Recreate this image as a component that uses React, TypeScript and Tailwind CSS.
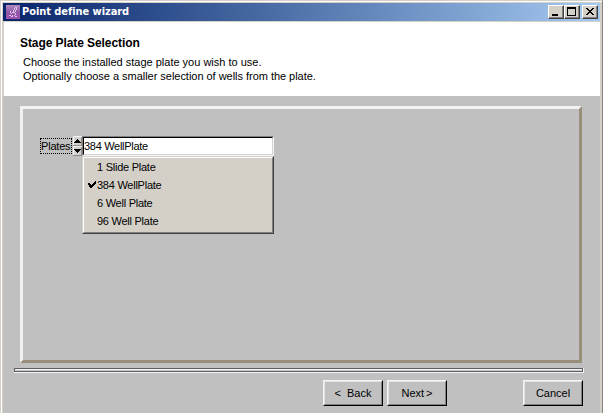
import React from "react";

const PLATES = ["1 Slide Plate", "384 WellPlate", "6 Well Plate", "96 Well Plate"];
const SELECTED = "384 WellPlate";

function CaptionButton({ children }: { children: React.ReactNode }) {
  return (
    <div className="h-[14px] w-4 border border-t-white border-l-white border-r-[#404040] border-b-[#404040] bg-[#d4d0c8]">
      <div className="h-full w-full border-r border-b border-[#808080]">
        <svg width="14" height="12" viewBox="0 0 14 12" shapeRendering="crispEdges" className="block overflow-visible">
          {children}
        </svg>
      </div>
    </div>
  );
}

function PushButton({ children }: { children: React.ReactNode }) {
  return (
    <button className="h-[26px] w-[60px] border border-t-[#f4f4f4] border-l-[#f4f4f4] border-r-black border-b-black bg-[#c0c0c0] text-[11px]">
      <span className="flex h-full w-full items-center justify-center border border-t-[#e4e4e4] border-l-[#e4e4e4] border-r-[#808080] border-b-[#808080] whitespace-pre">
        {children}
      </span>
    </button>
  );
}

function TitleBar() {
  return (
    <div className="flex h-[18px] items-center bg-linear-to-r from-[#0a246a] to-[#a6caf0] pr-[2px] pl-[3px]">
      <svg width="14" height="14" viewBox="0 0 14 14" shapeRendering="crispEdges">
        <defs>
          <linearGradient id="app" x1="0" y1="0" x2="0" y2="1">
            <stop offset="0" stopColor="#b58cc4" />
            <stop offset="0.5" stopColor="#8d58a6" />
            <stop offset="1" stopColor="#a050b4" />
          </linearGradient>
        </defs>
        <rect width="14" height="14" fill="url(#app)" />
        <path
          d="M9 2h2v1h-2zM8 3h1v2h-1zM10 3h1v2h-1zM7 5h1v2h-1zM9 5h1v2h-1zM6 7h3v1h-3zM4 6h1v2h-1zM5 8h1v1h-1zM9 8h1v2h-1zM3 10h2v1h-2zM6 10h1v1h-1zM8 10h1v1h-1zM5 11h2v1h-2zM9 11h2v1h-2z"
          fill="#dcc4e6"
        />
      </svg>
      <span className="ml-[2px] font-['DejaVu_Sans_Condensed','DejaVu_Sans',sans-serif] text-[11px] leading-[18px] font-bold tracking-[-0.06px] whitespace-nowrap text-white [font-stretch:condensed]">
        Point define wizard
      </span>
      <div className="ml-auto flex">
        <CaptionButton>
          <path d="M3 8h6v2h-6z" fill="#000" />
        </CaptionButton>
        <CaptionButton>
          <path d="M2 1h9v9h-9zM3 3v6h7v-6z" fill="#000" fillRule="evenodd" />
        </CaptionButton>
        <div className="w-[2px]" />
        <CaptionButton>
          <path
            d="M3 2h2v1h1v1h2v-1h1v-1h2v1h-1v1h-1v1h-1v1h1v1h1v1h1v1h-2v-1h-1v-1h-2v1h-1v1h-2v-1h1v-1h1v-1h1v-1h-1v-1h-1v-1h-1z"
            fill="#000"
          />
        </CaptionButton>
      </div>
    </div>
  );
}

function PlateList() {
  return (
    <div className="absolute top-5 left-[9px] h-[78px] w-[192px] border border-t-[#d4d0c8] border-l-[#d4d0c8] border-r-[#404040] border-b-[#404040] bg-[#d4d0c8] tracking-[-0.25px]">
      <div className="h-full border border-t-white border-l-white border-r-[#808080] border-b-[#808080]">
        {PLATES.map((plate) => (
          <div key={plate} className="flex h-[18px] items-center">
            <div className="flex w-[13px] justify-end pr-px">
              {plate === SELECTED && (
                <svg width="8" height="7" viewBox="0 0 8 7" shapeRendering="crispEdges" className="mb-px shrink-0">
                  <path d="M7 0h1v1h-1zM6 1h2v1h-2zM0 2h2v1h-2zM5 2h3v1h-3zM0 3h3v1h-3zM4 3h3v1h-3zM1 4h5v1h-5zM1 5h4v1h-4zM2 6h2v1h-2z" fill="#000" />
                </svg>
              )}
            </div>
            <span className="leading-[18px] whitespace-nowrap">{plate}</span>
          </div>
        ))}
      </div>
    </div>
  );
}

function PlateField() {
  return (
    <div className="flex">
      <div className="mt-[2px] mr-px flex h-4 w-8 items-center border border-dotted border-black tracking-[-0.2px]">
        Plates
      </div>
      <div className="relative flex h-5">
        <svg width="9" height="20" viewBox="0 0 9 20" shapeRendering="crispEdges">
          <rect width="9" height="20" fill="#d0d0d0" />
          <path d="M0 0h9v1h-8v8h-1zM0 10h9v1h-8v8h-1z" fill="#f4f4f4" />
          <path d="M8 1h1v9h-9v-1h8zM8 11h1v9h-9v-1h8z" fill="#8c8c8c" />
          <path d="M4 3h1v1h1v1h1v1h1v1h-7v-1h1v-1h1v-1h1zM1 13h7v1h-1v1h-1v1h-1v1h-1v-1h-1v-1h-1v-1h-1z" fill="#000" />
        </svg>
        <div className="h-5 w-[192px] border border-t-[#808080] border-l-[#808080] border-r-[#f4f4f4] border-b-[#f4f4f4]">
          <div className="flex h-full items-center border border-t-black border-l-black border-r-[#d4d4d4] border-b-[#d4d4d4] bg-white tracking-[-0.3px]">
            {SELECTED}
          </div>
        </div>
        <PlateList />
      </div>
    </div>
  );
}

export default function App() {
  return (
    <div className="h-[413px] w-[603px] overflow-hidden border-t border-r border-l border-t-[#d4d0c8] border-r-[#808080] border-l-[#d4d0c8] bg-[#d4d0c8] font-['Liberation_Sans',Arial,sans-serif] text-[11px] leading-[14px] text-black">
      <div className="h-full border-t border-l border-white pt-px pr-[2px] pl-px">
        <TitleBar />
        <div className="mt-px h-[74px] border-l border-[#d4d0c8] bg-white pt-[14px] pl-4">
          <h1 className="text-[12px] leading-[14px] font-bold tracking-[-0.08px]">Stage Plate Selection</h1>
          <div className="mt-[5px] pl-[3px] whitespace-nowrap">
            <p>Choose the installed stage plate you wish to use.</p>
            <p className="tracking-[-0.03px]">Optionally choose a smaller selection of wells from the plate.</p>
          </div>
        </div>
        <div className="h-[317px] bg-[#c0c0c0] pt-[10px] pl-[11px]">
          <div className="ml-[6px] h-[257px] w-[562px] border-[3px] border-t-[#f2f2f2] border-r-[#988f7b] border-b-[#988f7b] border-l-[#f2f2f2] pt-[27px] pl-[17px]">
            <PlateField />
          </div>
          <div className="mt-[5px] h-[5px] w-[570px] border-r border-b border-[#f4f4f4]">
            <div className="h-1 border border-[#625d64] bg-[#c8c8c8]">
              <div className="h-px bg-[#f4f4f4]" />
            </div>
          </div>
          <div className="mt-[7px] flex w-[569px] justify-end">
            <PushButton>{"<  Back"}</PushButton>
            <div className="w-1" />
            <PushButton>
              Next<span className="ml-[2px]">&gt;</span>
            </PushButton>
            <div className="w-[76px]" />
            <PushButton>Cancel</PushButton>
          </div>
        </div>
      </div>
    </div>
  );
}
